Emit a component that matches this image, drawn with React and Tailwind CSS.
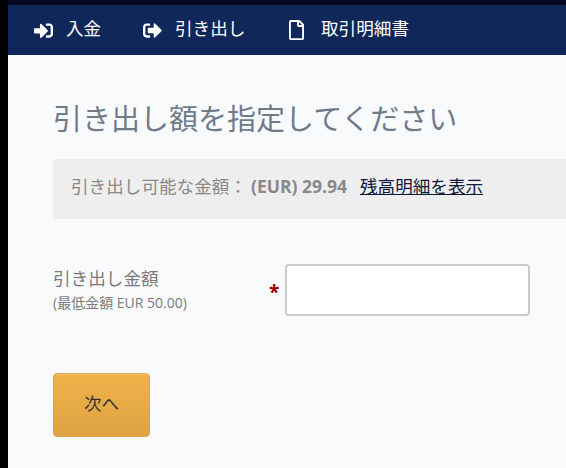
import { FaSignInAlt, FaSignOutAlt, FaRegFile } from "react-icons/fa";

const font = "font-['Open_Sans','Noto_Sans_CJK_JP',sans-serif]";

function NavItem({ icon, label, gap, className }) {
  return (
    <div className={`flex items-center ${gap} ${className}`}>
      {icon}
      <span className="text-[17.6px] text-white leading-none pb-[2px]">{label}</span>
    </div>
  );
}

function Header() {
  return (
    <div>
      <div className="h-[5px] bg-[#050b24]" />
      <nav className="h-[50px] bg-[#10275a] flex items-center pl-[26px]">
        <NavItem icon={<FaSignInAlt size={19} className="text-white" />} label="入金" gap="gap-[13px]" className="w-[109px]" />
        <NavItem icon={<FaSignOutAlt size={19} className="text-white" />} label="引き出し" gap="gap-[13px]" className="w-[146px]" />
        <NavItem icon={<FaRegFile className="w-[15px] h-[20px] text-white" />} label="取引明細書" gap="gap-[17px]" />
      </nav>
    </div>
  );
}

export default function App() {
  return (
    <div className={`${font} h-[468px] w-[566px] overflow-hidden bg-black pl-[8px]`}>
      <div className="h-full bg-[#f9fafc]">
        <Header />
        <main className="pl-[45px] pt-[46px]">
          <h1 className="text-[29px] leading-[36px] text-[#6f7a8a] font-normal whitespace-nowrap">引き出し額を指定してください</h1>
          <div className="mt-[22px] h-[60px] bg-[#eeeeee] rounded-l-[3px] flex items-center pl-[18px] pb-[5px] text-[17.6px] text-[#888888] whitespace-nowrap">
            <span>引き出し可能な金額：</span>
            <b className="font-bold text-[17.5px] ml-[4px]">(EUR) 29.94</b>
            <a className="ml-[13px] text-[#10193a] underline">残高明細を表示</a>
          </div>
          <div className="mt-[45px] flex items-center">
            <div className="w-[216px] text-[#7a7a7a] pb-[2px]">
              <div className="text-[17.6px] leading-[24px]">引き出し金額</div>
              <div className="mt-[3px] text-[14px] leading-[20px]">(最低金額 EUR 50.00)</div>
            </div>
            <span className="w-[16px] text-[#a00000] font-bold text-[19px] leading-none pt-[4px]">*</span>
            <input className="w-[245px] h-[52px] bg-white border-2 border-[#cccccc] rounded-[4px]" />
          </div>
          <button className="mt-[57px] w-[97px] h-[64px] rounded-[4px] border border-[#dca545] shadow-[inset_0_1px_0_rgba(255,255,255,0.2)] bg-gradient-to-b from-[#f0b24a] to-[#dea342] text-[17.6px] text-[#333333] pb-[3px]">
            次へ
          </button>
        </main>
      </div>
    </div>
  );
}
